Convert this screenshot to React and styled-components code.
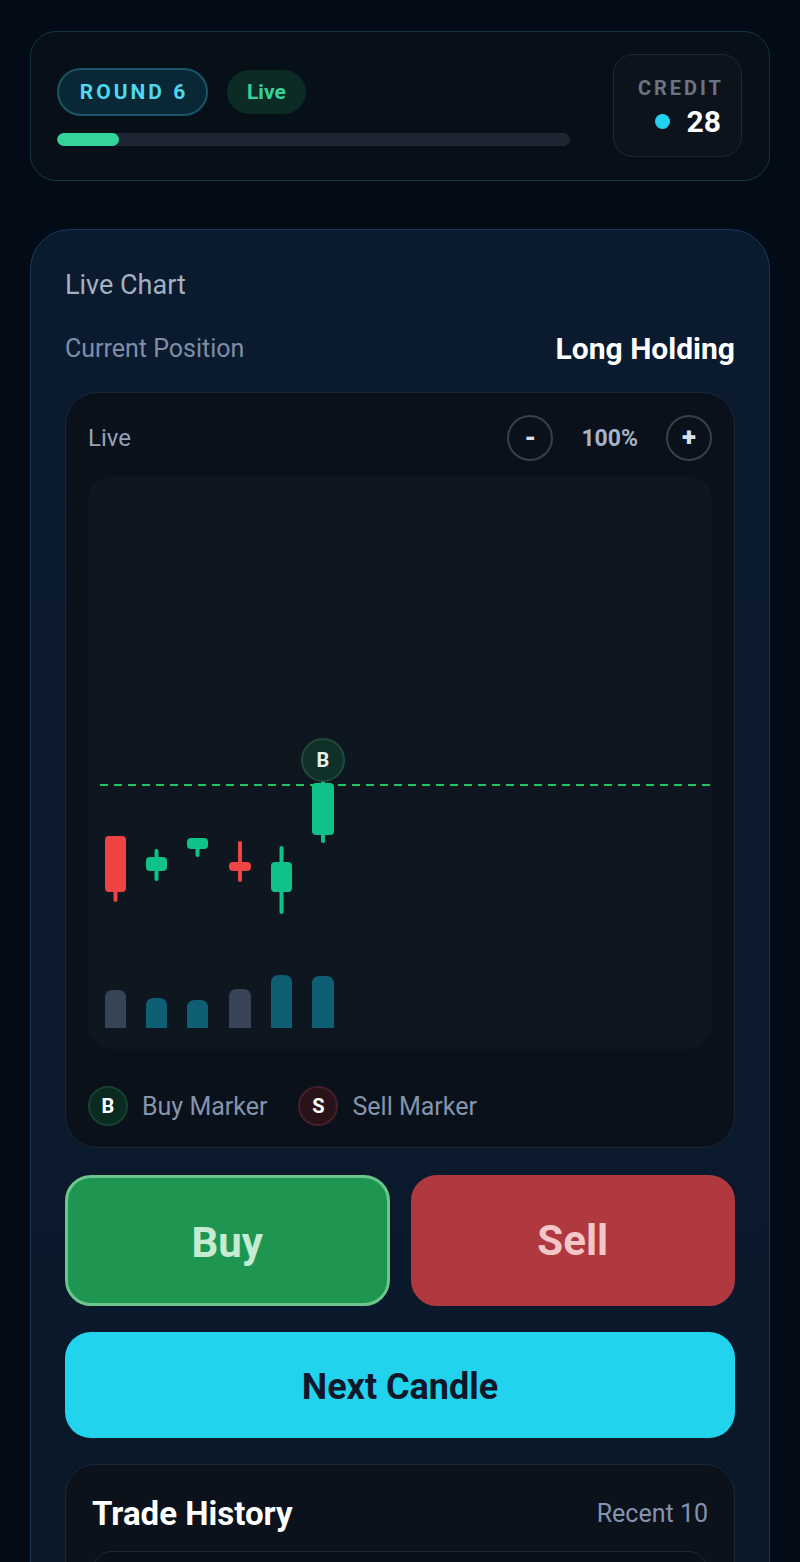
import React from "react";
import styled, { createGlobalStyle } from "styled-components";

const GlobalStyle = createGlobalStyle`
  html { scrollbar-width: none; }
  html::-webkit-scrollbar { display: none; }
  body {
    margin: 0;
    background: #030b17;
    font-family: Roboto, "Liberation Sans", Arial, sans-serif;
    color: #e5e7eb;
  }
  * { box-sizing: border-box; }
`;

const Page = styled.div`
  padding: 31px 30px 40px;
  display: flex;
  flex-direction: column;
  gap: 48px;
`;

/* ---------- header ---------- */

const HeaderCard = styled.header`
  height: 150px;
  border: 1.5px solid #0f3843;
  border-radius: 26px;
  background: #070f19;
  display: flex;
  align-items: center;
  gap: 43px;
  padding: 2px 27px 0 26px;
`;

const HeaderMain = styled.div`
  flex: 1;
  display: flex;
  flex-direction: column;
  gap: 17px;
`;

const PillRow = styled.div`
  display: flex;
  align-items: center;
  gap: 19px;
`;

const RoundPill = styled.div`
  height: 48px;
  width: 151px;
  border-radius: 24px;
  border: 2px solid #175769;
  background: #0a2735;
  color: #4fd8ef;
  font-weight: 700;
  font-size: 21px;
  letter-spacing: 3px;
  display: flex;
  align-items: center;
  justify-content: center;
  padding-left: 3px;
`;

const LivePill = styled.div`
  height: 44px;
  padding: 0 20px;
  border-radius: 22px;
  background: #0c2b24;
  color: #34d399;
  font-weight: 700;
  font-size: 21px;
  display: flex;
  align-items: center;
`;

const Progress = styled.div`
  height: 13px;
  border-radius: 7px;
  background: #1e2633;
  overflow: hidden;
`;

const ProgressFill = styled.div`
  height: 100%;
  border-radius: 7px;
  background: #34d399;
`;

const CreditBox = styled.div`
  width: 129px;
  height: 103px;
  margin-top: -4px;
  border: 1.5px solid #1d2835;
  border-radius: 20px;
  background: #0c131d;
  display: flex;
  flex-direction: column;
  align-items: flex-end;
  justify-content: center;
  gap: 5px;
  padding: 4px 20px 0 0;
`;

const CreditLabel = styled.div`
  font-size: 20px;
  font-weight: 700;
  letter-spacing: 3px;
  margin-right: -3px;
  color: #6b7482;
  line-height: 24px;
`;

const CreditValue = styled.div`
  display: flex;
  align-items: center;
  gap: 17px;
  font-size: 30px;
  font-weight: 700;
  color: #ffffff;
  line-height: 34px;
`;

const Dot = styled.span`
  width: 15px;
  height: 15px;
  border-radius: 50%;
  background: #22d3ee;
`;

/* ---------- main card ---------- */

const MainCard = styled.section`
  border: 1.5px solid #1a3a5d;
  border-radius: 40px;
  background: linear-gradient(180deg, #0b1b2f 0%, #0a1829 100%);
  padding: 39px 34px 40px;
  display: flex;
  flex-direction: column;
`;

const CardTitle = styled.div`
  font-size: 27px;
  line-height: 32px;
  color: #a3b0c2;
`;

const PositionRow = styled.div`
  margin-top: 29px;
  height: 36px;
  display: flex;
  align-items: center;
  justify-content: space-between;
`;

const PositionLabel = styled.span`
  font-size: 25px;
  color: #7f8ea6;
`;

const PositionValue = styled.span`
  font-size: 30px;
  font-weight: 700;
  color: #ffffff;
`;

const ChartPanel = styled.div`
  margin-top: 26px;
  border: 1.5px solid #1b2637;
  border-radius: 32px;
  background: #0a111b;
  padding: 22px 22px 21px;
  display: flex;
  flex-direction: column;
`;

const PanelBar = styled.div`
  height: 46px;
  display: flex;
  align-items: center;
  justify-content: space-between;
`;

const PanelLabel = styled.span`
  font-size: 24px;
  color: #95a3b8;
`;

const ZoomControls = styled.div`
  display: flex;
  align-items: center;
  gap: 28px;
`;

const ZoomButton = styled.button`
  width: 46px;
  height: 46px;
  border-radius: 50%;
  border: 2px solid #354052;
  background: transparent;
  color: #d7dee8;
  font-family: inherit;
  font-weight: 900;
  font-size: 26px;
  line-height: 1;
  display: flex;
  align-items: center;
  justify-content: center;
  padding: 0 0 3px;
`;

const ZoomValue = styled.span`
  font-size: 23px;
  font-weight: 700;
  color: #a5b3c6;
`;

const ChartArea = styled.div`
  margin-top: 15px;
  height: 573px;
  border-radius: 24px;
  background: #0e1620;
  overflow: hidden;
  svg { display: block; }
`;

const Legend = styled.div`
  margin-top: 37px;
  display: flex;
  align-items: center;
  gap: 31px;
`;

const LegendItem = styled.div`
  display: flex;
  align-items: center;
  gap: 14px;
  font-size: 25px;
  color: #8494ad;
`;

const MarkerBadge = styled.span`
  width: 40px;
  height: 40px;
  border-radius: 50%;
  display: flex;
  align-items: center;
  justify-content: center;
  font-size: 20px;
  font-weight: 700;
  color: #ffffff;
  background: ${(p) => (p.$kind === "buy" ? "#0b2a1f" : "#2a1219")};
  border: 2px solid ${(p) => (p.$kind === "buy" ? "#17402f" : "#432029")};
`;

const ActionRow = styled.div`
  margin-top: 27px;
  display: grid;
  grid-template-columns: 1fr 1fr;
  gap: 21px;
`;

const TradeButton = styled.button`
  height: 131px;
  border-radius: 26px;
  font-family: inherit;
  font-size: 42px;
  font-weight: 700;
  display: flex;
  align-items: center;
  justify-content: center;
  background: ${(p) => (p.$side === "buy" ? "#1e9651" : "#b0383f")};
  color: ${(p) => (p.$side === "buy" ? "#c5ebd3" : "#f4c6c8")};
  border: 3px solid ${(p) => (p.$side === "buy" ? "#6cc58d" : "#b0383f")};
  padding-top: ${(p) => (p.$side === "buy" ? "4px" : "0")};
`;

const NextButton = styled.button`
  margin-top: 26px;
  height: 106px;
  border: none;
  border-radius: 26px;
  background: #22d3ee;
  color: #0f172a;
  font-family: inherit;
  font-size: 36px;
  font-weight: 700;
  padding-top: 4px;
`;

const HistoryCard = styled.div`
  margin-top: 26px;
  border: 1.5px solid #1c2838;
  border-radius: 30px;
  background: #0b121c;
  padding: 28px 26px 26px;
  display: flex;
  flex-direction: column;
  gap: 18px;
`;

const HistoryHead = styled.div`
  height: 40px;
  display: flex;
  align-items: center;
  justify-content: space-between;
`;

const HistoryTitle = styled.span`
  font-size: 33px;
  font-weight: 700;
  color: #ffffff;
`;

const HistoryMeta = styled.span`
  font-size: 25px;
  color: #8494ad;
`;

const HistoryList = styled.div`
  border: 1.5px solid #1c2838;
  border-radius: 20px;
  background: #09101a;
  min-height: 120px;
`;

/* ---------- chart drawing ---------- */

const UP = "#10c28a";
const DOWN = "#ef4444";
const VOL_UP = "#0e5f74";
const VOL_DOWN = "#374357";

const candles = [
  { x: 17, w: 21, top: 360, bottom: 416, hi: 360, lo: 426, up: false, vol: 38 },
  { x: 58, w: 21, top: 381, bottom: 395, hi: 373, lo: 405, up: true, vol: 30 },
  { x: 99, w: 21, top: 362, bottom: 373, hi: 362, lo: 381, up: true, vol: 28 },
  { x: 141, w: 22, top: 386, bottom: 395, hi: 365, lo: 406, up: false, vol: 39 },
  { x: 183, w: 21, top: 386, bottom: 416, hi: 370, lo: 438, up: true, vol: 53 },
  { x: 224, w: 22, top: 307, bottom: 359, hi: 302, lo: 367, up: true, vol: 52 },
];

const VOL_BASE = 552;

function Candles() {
  return (
    <svg width="624" height="573" viewBox="0 0 624 573">
      <line
        x1="12"
        y1="309"
        x2="622"
        y2="309"
        stroke="#22c55e"
        strokeWidth="2"
        strokeDasharray="8 6"
      />
      {candles.map((c, i) => {
        const cx = c.x + c.w / 2;
        const color = c.up ? UP : DOWN;
        return (
          <g key={i}>
            <rect x={cx - 2} y={c.hi} width="4" height={c.lo - c.hi} rx="2" fill={color} />
            <rect x={c.x} y={c.top} width={c.w} height={c.bottom - c.top} rx="4" fill={color} />
            <path
              d={`M${c.x} ${VOL_BASE} V${VOL_BASE - c.vol + 8} Q${c.x} ${VOL_BASE - c.vol} ${c.x + 8} ${VOL_BASE - c.vol} H${c.x + c.w - 8} Q${c.x + c.w} ${VOL_BASE - c.vol} ${c.x + c.w} ${VOL_BASE - c.vol + 8} V${VOL_BASE} Z`}
              fill={c.up ? VOL_UP : VOL_DOWN}
            />
          </g>
        );
      })}
      <circle cx="235" cy="284" r="21" fill="#10302a" stroke="#1f4a3b" strokeWidth="2" />
      <text
        x="235"
        y="291"
        textAnchor="middle"
        fill="#e8f1ee"
        fontFamily="Roboto, sans-serif"
        fontWeight="700"
        fontSize="20"
      >
        B
      </text>
    </svg>
  );
}

export default function App() {
  return (
    <>
      <GlobalStyle />
      <Page>
        <HeaderCard>
          <HeaderMain>
            <PillRow>
              <RoundPill>ROUND 6</RoundPill>
              <LivePill>Live</LivePill>
            </PillRow>
            <Progress>
              <ProgressFill style={{ width: `${(6 / 50) * 100}%` }} />
            </Progress>
          </HeaderMain>
          <CreditBox>
            <CreditLabel>CREDIT</CreditLabel>
            <CreditValue>
              <Dot />
              28
            </CreditValue>
          </CreditBox>
        </HeaderCard>

        <MainCard>
          <CardTitle>Live Chart</CardTitle>
          <PositionRow>
            <PositionLabel>Current Position</PositionLabel>
            <PositionValue>Long Holding</PositionValue>
          </PositionRow>

          <ChartPanel>
            <PanelBar>
              <PanelLabel>Live</PanelLabel>
              <ZoomControls>
                <ZoomButton>-</ZoomButton>
                <ZoomValue>100%</ZoomValue>
                <ZoomButton>+</ZoomButton>
              </ZoomControls>
            </PanelBar>
            <ChartArea>
              <Candles />
            </ChartArea>
            <Legend>
              <LegendItem>
                <MarkerBadge $kind="buy">B</MarkerBadge>
                Buy Marker
              </LegendItem>
              <LegendItem>
                <MarkerBadge $kind="sell">S</MarkerBadge>
                Sell Marker
              </LegendItem>
            </Legend>
          </ChartPanel>

          <ActionRow>
            <TradeButton $side="buy">Buy</TradeButton>
            <TradeButton $side="sell">Sell</TradeButton>
          </ActionRow>

          <NextButton>Next Candle</NextButton>

          <HistoryCard>
            <HistoryHead>
              <HistoryTitle>Trade History</HistoryTitle>
              <HistoryMeta>Recent 10</HistoryMeta>
            </HistoryHead>
            <HistoryList />
          </HistoryCard>
        </MainCard>
      </Page>
    </>
  );
}
